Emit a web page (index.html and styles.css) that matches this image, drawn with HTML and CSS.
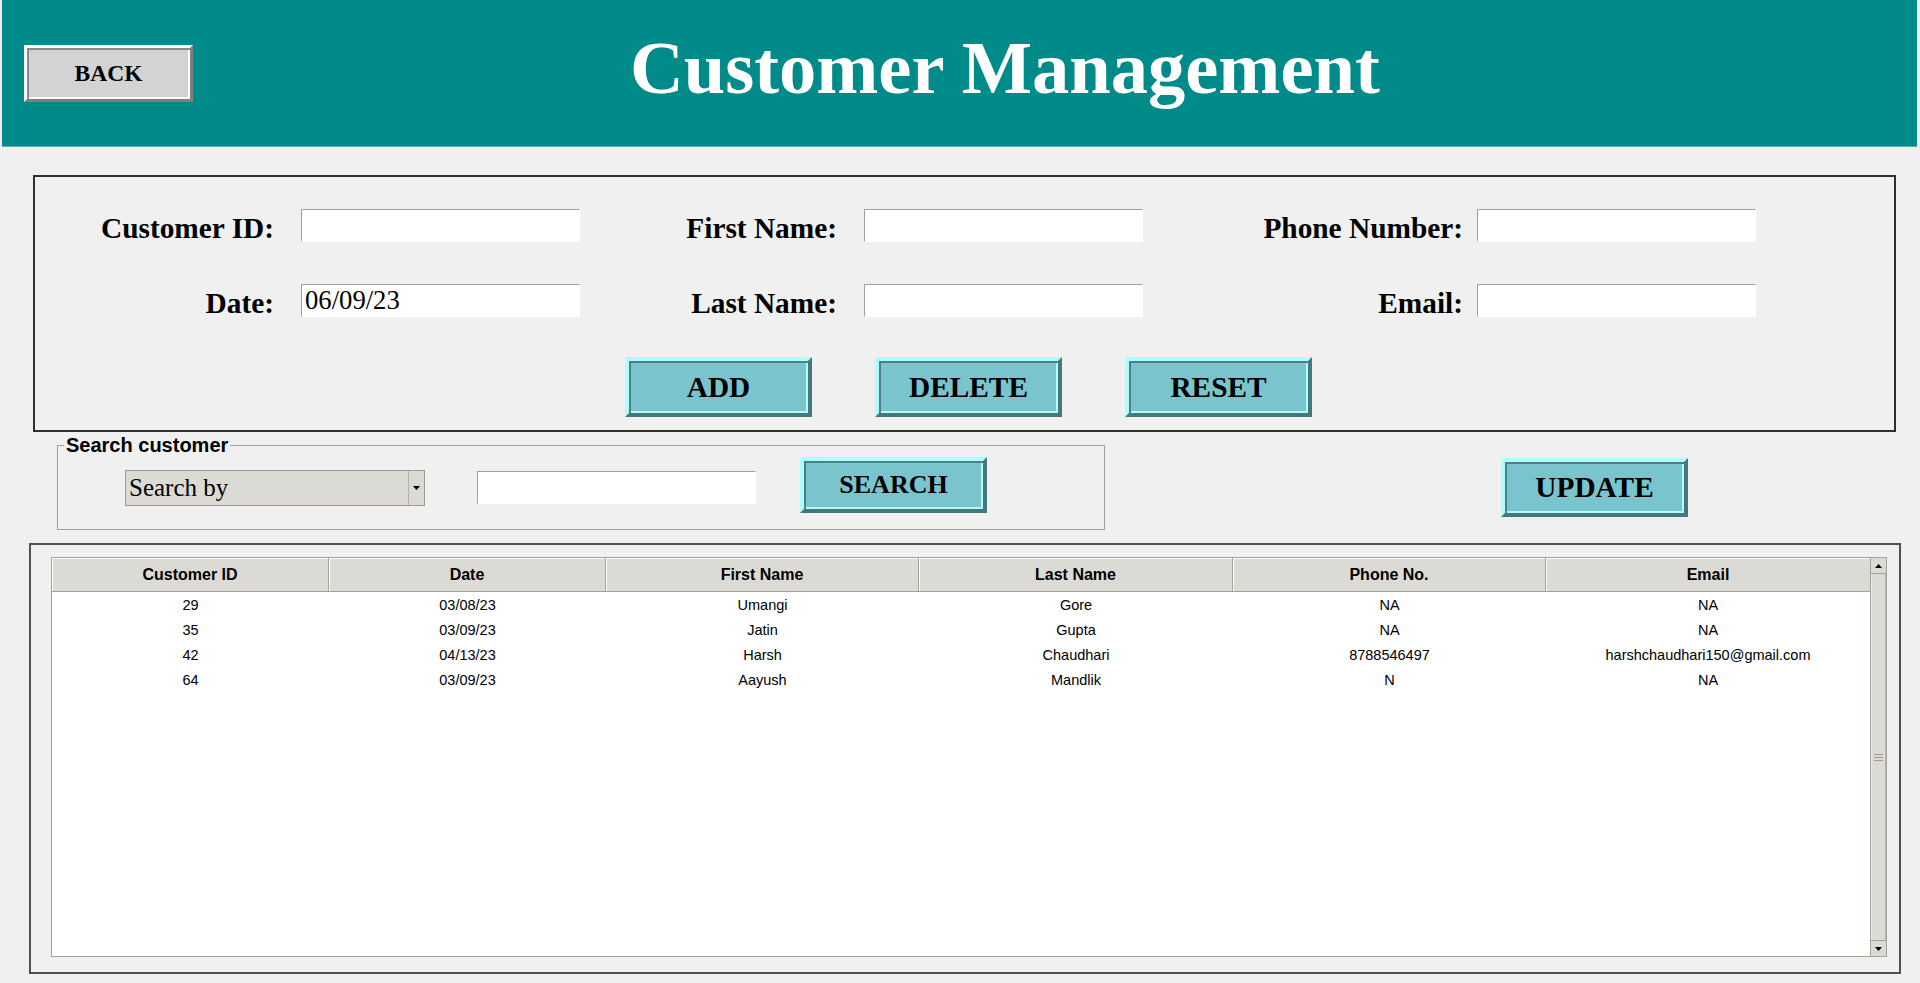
FILE: index.html
```html
<!DOCTYPE html>
<html lang="en">
<head>
<meta charset="utf-8">
<title>Customer Management</title>
<link rel="stylesheet" href="styles.css">
</head>
<body>
<div class="app">
  <header class="topbar">
    <button class="btn btn-back">BACK</button>
    <h1 class="title">Customer Management</h1>
  </header>

  <section class="form-panel">
    <div class="form-grid">
      <label class="lbl lbl-wide">Customer ID:</label>
      <input class="entry" type="text">
      <label class="lbl lbl-wide">First Name:</label>
      <input class="entry" type="text">
      <label class="lbl lbl-narrow">Phone Number:</label>
      <input class="entry" type="text">

      <label class="lbl lbl-wide">Date:</label>
      <input class="entry" type="text" value="06/09/23">
      <label class="lbl lbl-wide">Last Name:</label>
      <input class="entry" type="text">
      <label class="lbl lbl-narrow">Email:</label>
      <input class="entry" type="text">
    </div>
    <div class="actions">
      <button class="btn btn-teal btn-action">ADD</button>
      <button class="btn btn-teal btn-action">DELETE</button>
      <button class="btn btn-teal btn-action">RESET</button>
    </div>
  </section>

  <div class="search-row">
    <fieldset class="search-box">
      <legend>Search customer</legend>
      <div class="search-inner">
        <div class="combo">
          <span class="combo-text">Search by</span>
          <span class="combo-arrow"><svg width="7" height="4" viewBox="0 0 7 4"><polygon points="0,0 7,0 3.5,4" fill="#000"/></svg></span>
        </div>
        <input class="entry entry-search" type="text">
        <button class="btn btn-teal btn-search">SEARCH</button>
      </div>
    </fieldset>
    <button class="btn btn-teal btn-update">UPDATE</button>
  </div>

  <section class="table-frame">
    <div class="tree">
      <div class="tree-body">
        <table class="grid">
          <colgroup>
            <col class="c-id"><col class="c-date"><col class="c-first"><col class="c-last"><col class="c-phone"><col>
          </colgroup>
          <thead>
            <tr><th>Customer ID</th><th>Date</th><th>First Name</th><th>Last Name</th><th>Phone No.</th><th>Email</th></tr>
          </thead>
          <tbody>
            <tr><td>29</td><td>03/08/23</td><td>Umangi</td><td>Gore</td><td>NA</td><td>NA</td></tr>
            <tr><td>35</td><td>03/09/23</td><td>Jatin</td><td>Gupta</td><td>NA</td><td>NA</td></tr>
            <tr><td>42</td><td>04/13/23</td><td>Harsh</td><td>Chaudhari</td><td>8788546497</td><td>harshchaudhari150@gmail.com</td></tr>
            <tr><td>64</td><td>03/09/23</td><td>Aayush</td><td>Mandlik</td><td>N</td><td>NA</td></tr>
          </tbody>
        </table>
      </div>
      <div class="vscroll">
        <div class="vs-btn"><svg width="7" height="4" viewBox="0 0 7 4"><polygon points="3.5,0 7,4 0,4" fill="#000"/></svg></div>
        <div class="vs-thumb">
          <svg width="9" height="7" viewBox="0 0 9 7"><rect x="0" y="0" width="9" height="1" fill="#9e9a91"/><rect x="0" y="3" width="9" height="1" fill="#9e9a91"/><rect x="0" y="6" width="9" height="1" fill="#9e9a91"/></svg>
        </div>
        <div class="vs-btn vs-btn-down"><svg width="7" height="4" viewBox="0 0 7 4"><polygon points="0,0 7,0 3.5,4" fill="#000"/></svg></div>
      </div>
    </div>
  </section>
</div>
</body>
</html>
```
FILE: styles.css
```css
* { box-sizing: border-box; }
html, body { margin: 0; padding: 0; }
body {
  background: #f0f0f0;
  width: 1920px;
  height: 983px;
  overflow: hidden;
  font-family: "Liberation Serif", "Times New Roman", serif;
  color: #000;
}

/* ---------- header ---------- */
.topbar {
  display: flex;
  align-items: flex-start;
  height: 147px;
  margin: 0 3px 0 2px;
  background: #008b8a;
  border-bottom: 1px solid #5aaeac;
}
.btn {
  font-family: "Liberation Serif", "Times New Roman", serif;
  font-weight: bold;
  color: #000;
  padding: 0;
  border-style: solid;
  cursor: default;
  white-space: nowrap;
}
.btn-back {
  width: 169px;
  height: 57px;
  margin: 45px 0 0 22px;
  font-size: 23.5px;
  background: #d3d3d3;
  border-width: 3px;
  border-color: #ffffff #7e7e7e #7e7e7e #ffffff;
  box-shadow: inset 2px 2px 0 #8a8a8a, inset -2px -2px 0 #ffffff;
}
.title {
  margin: 31px 0 0 437px;
  font-size: 74.5px;
  line-height: 75px;
  font-weight: bold;
  color: #ffffff;
  white-space: nowrap;
}

/* ---------- form panel ---------- */
.form-panel {
  margin: 28px 24px 0 33px;
  border: 2px solid #2f2f2f;
  padding: 32px 0 13px 0;
}
.form-grid {
  display: grid;
  grid-template-columns: 266px 279px 284px 279px 334px 279px;
  grid-auto-rows: 33px;
  row-gap: 42px;
  align-items: start;
}
.lbl {
  font-size: 29.33px;
  font-weight: bold;
  text-align: right;
  line-height: 38px;
  white-space: nowrap;
}
.lbl-wide { padding-right: 27px; }
.lbl-narrow { padding-right: 14px; }
.entry {
  width: 279px;
  height: 33px;
  margin: 0;
  padding: 0 0 0 3px;
  border: 1px solid;
  border-color: #a0a0a0 #ffffff #ffffff #a0a0a0;
  background: #ffffff;
  font-family: "Liberation Serif", "Times New Roman", serif;
  font-size: 26.67px;
  color: #000;
  outline: none;
}
.actions {
  display: flex;
  gap: 63px;
  margin-top: 40px;
  padding-left: 590px;
}
.btn-teal {
  background: #7ac5cd;
  border-width: 4px;
  border-color: #abffff #49767b #49767b #abffff;
  box-shadow: inset 2px 2px 0 #4f7f84, inset -2px -2px 0 #abffff;
}
.btn-action {
  width: 187px;
  height: 60px;
  font-size: 29.33px;
}

/* ---------- search ---------- */
.search-row {
  display: flex;
  align-items: flex-start;
  margin-left: 57px;
}
.search-box {
  width: 1048px;
  min-width: 0;
  margin: 1px 0 0 0;
  padding: 0 0 16px 0;
  border: 1px solid #a0a0a0;
}
.search-box legend {
  margin-left: 6px;
  padding: 0 2px;
  font-family: "Liberation Sans", Arial, sans-serif;
  font-weight: bold;
  font-size: 20px;
  line-height: 24px;
}
.search-inner {
  display: flex;
  align-items: flex-start;
}
.combo {
  display: flex;
  width: 300px;
  height: 36px;
  margin: 13px 0 0 67px;
  background: #dcdad5;
  border: 1px solid #9e9a91;
}
.combo-text {
  flex: 1;
  font-size: 25px;
  line-height: 34px;
  padding-left: 3px;
}
.combo-arrow {
  width: 16px;
  display: flex;
  align-items: center;
  justify-content: center;
  border-left: 1px solid #b5b1a8;
}
.entry-search { margin: 14px 0 0 52px; }
.btn-search {
  width: 187px;
  height: 56px;
  margin-left: 44px;
  font-size: 26px;
}
.btn-update {
  width: 187px;
  height: 59px;
  margin: 26px 0 0 396px;
  font-size: 29.33px;
}

/* ---------- table ---------- */
.table-frame {
  margin: 13px 19px 0 29px;
  border: 2px solid #505050;
  padding: 12px 12px 15px 20px;
}
.tree {
  display: flex;
  height: 400px;
}
.tree-body {
  flex: 1;
  background: #ffffff;
  border: 1px solid #a5a196;
  border-right: none;
  overflow: hidden;
}
.grid {
  width: 100%;
  border-collapse: separate;
  border-spacing: 0;
  table-layout: fixed;
  font-family: "Liberation Sans", Arial, sans-serif;
}
.c-id { width: 277px; }
.c-date { width: 277px; }
.c-first { width: 313px; }
.c-last { width: 314px; }
.c-phone { width: 313px; }
.grid th {
  height: 34px;
  padding: 0;
  background: #dcdad5;
  font-size: 16px;
  font-weight: bold;
  border-right: 1px solid #a5a196;
  border-bottom: 1px solid #a5a196;
  box-shadow: inset 1px 1px 0 #ffffff;
}
.grid th:last-child { border-right: none; }
.grid td {
  height: 25px;
  padding: 0;
  font-size: 14.5px;
  text-align: center;
  white-space: nowrap;
}
.vscroll {
  width: 17px;
  display: flex;
  flex-direction: column;
  background: #dcdad5;
  border: 1px solid #a5a196;
}
.vs-btn {
  height: 16px;
  display: flex;
  align-items: center;
  justify-content: center;
  border-bottom: 1px solid #a5a196;
}
.vs-btn-down {
  border-bottom: none;
  border-top: 1px solid #a5a196;
}
.vs-thumb {
  flex: 1;
  display: flex;
  align-items: center;
  justify-content: center;
  border-left: 1px solid #eeebe7;
  border-right: 1px solid #bab5ab;
}
```
